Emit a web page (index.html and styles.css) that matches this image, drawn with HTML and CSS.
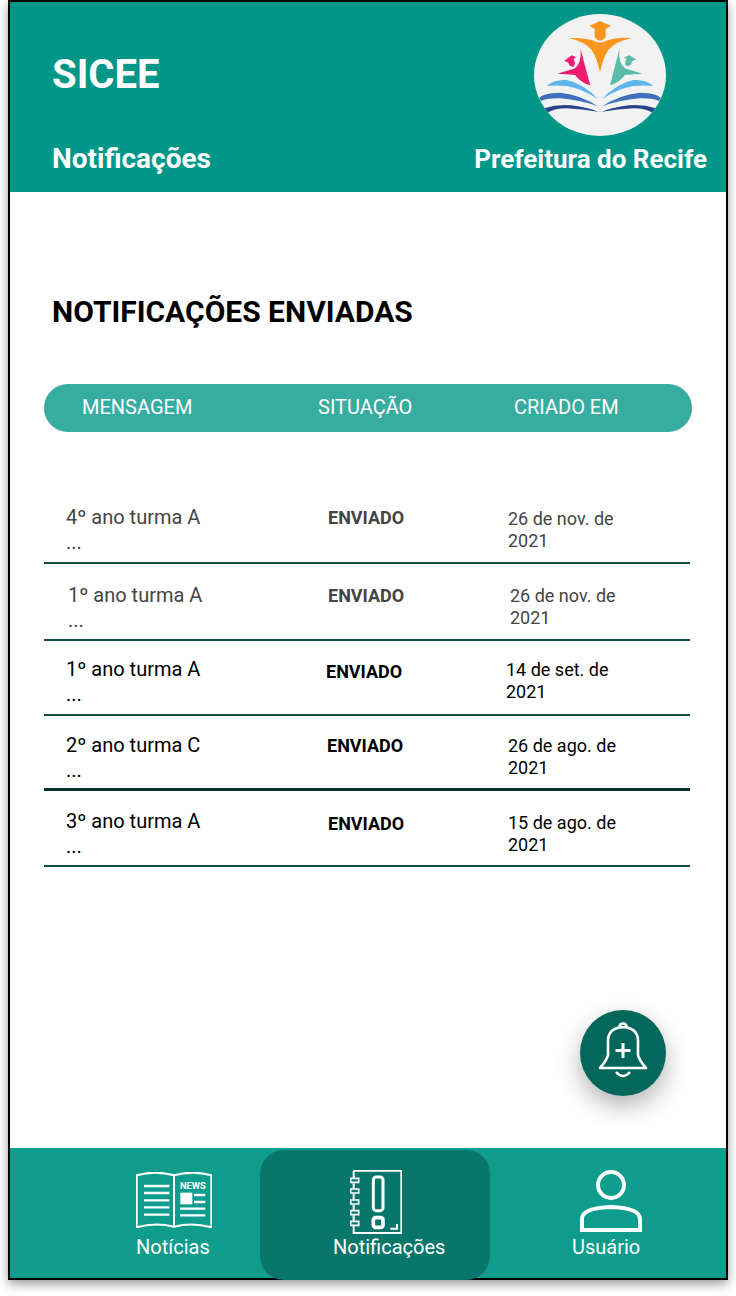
FILE: index.html
```html
<!doctype html>
<html lang="pt-BR">
<head>
    <meta charset="UTF-8">
    <title>SICEE</title>
    <link rel="stylesheet" href="styles.css">
</head>
<body>
<div class="phone">
    <header class="top">
        <div class="top_left">
            <h1>SICEE</h1>
            <h2>Notificações</h2>
        </div>
        <div class="top_right">
            <svg class="logo" viewBox="72 42 396 366">
                <defs>
                    <clipPath id="logo_clip"><ellipse cx="270" cy="225" rx="198" ry="183"/></clipPath>
                </defs>
                <ellipse cx="270" cy="225" rx="198" ry="183" fill="#f2f2f2"/>
                <g clip-path="url(#logo_clip)">
                    <path fill="#f8951d" d="M238 78 L270 63 L303 78 L287 86 L287 112 Q270 132 254 112 L254 86 Z"/>
                    <path fill="#f8951d" d="M176 114 Q230 112 258 125 Q270 130 282 125 Q315 110 365 114 Q315 125 295 150 Q278 175 270 218 Q262 175 245 150 Q225 125 176 114 Z"/>
                    <path fill="#ed1a70" d="M212 147 Q225 200 241 256 Q215 250 195 225 Q170 222 143 221 Q175 212 195 205 Q215 190 212 147 Z"/>
                    <path fill="#ed1a70" d="M163 182 L185 166 L198 172 L190 178 Q200 190 190 200 Q178 200 175 188 Z"/>
                    <path fill="#5cbcaa" d="M328 147 Q315 200 300 256 Q325 250 345 225 Q370 222 398 222 Q365 212 345 205 Q325 190 328 147 Z"/>
                    <path fill="#5cbcaa" d="M378 178 L358 166 L342 172 L350 178 Q340 190 350 198 Q365 198 365 185 Z"/>
                    <g>
                        <path fill="#5fb4ea" d="M110 258 Q130 238 170 240 Q220 250 265 298 Q215 265 170 258 Q140 255 110 258 Z"/>
                        <path fill="#3f70bb" d="M88 295 Q95 280 150 278 Q215 285 265 320 Q215 300 150 295 Q115 293 92 303 Z"/>
                        <path fill="#27418d" d="M103 325 Q150 310 200 318 Q240 325 265 335 Q215 328 170 325 Q135 325 112 338 Z"/>
                    </g>
                    <g transform="matrix(-1 0 0 1 540 0)">
                        <path fill="#5fb4ea" d="M110 258 Q130 238 170 240 Q220 250 265 298 Q215 265 170 258 Q140 255 110 258 Z"/>
                        <path fill="#3f70bb" d="M88 295 Q95 280 150 278 Q215 285 265 320 Q215 300 150 295 Q115 293 92 303 Z"/>
                        <path fill="#27418d" d="M103 325 Q150 310 200 318 Q240 325 265 335 Q215 328 170 325 Q135 325 112 338 Z"/>
                    </g>
                </g>
            </svg>
            <span class="city">Prefeitura do Recife</span>
        </div>
    </header>

    <main class="content">
        <h3 class="title">NOTIFICAÇÕES ENVIADAS</h3>
        <div class="thead">
            <span class="th_msg">MENSAGEM</span>
            <span class="th_sit">SITUAÇÃO</span>
            <span class="th_date">CRIADO EM</span>
        </div>
        <ul class="list">
            <li class="row row_gray row_1">
                <div class="msg">4º ano turma A<br>...</div>
                <div class="sit">ENVIADO</div>
                <div class="date">26 de nov. de<br>2021</div>
            </li>
            <li class="row row_gray row_2">
                <div class="msg">1º ano turma A<br>...</div>
                <div class="sit">ENVIADO</div>
                <div class="date">26 de nov. de<br>2021</div>
            </li>
            <li class="row row_3">
                <div class="msg">1º ano turma A<br>...</div>
                <div class="sit">ENVIADO</div>
                <div class="date">14 de set. de<br>2021</div>
            </li>
            <li class="row row_4">
                <div class="msg">2º ano turma C<br>...</div>
                <div class="sit">ENVIADO</div>
                <div class="date">26 de ago. de<br>2021</div>
            </li>
            <li class="row row_5">
                <div class="msg">3º ano turma A<br>...</div>
                <div class="sit">ENVIADO</div>
                <div class="date">15 de ago. de<br>2021</div>
            </li>
        </ul>
    </main>

    <button class="fab">
        <svg width="50" height="56" viewBox="0 0 50 56" fill="none" stroke="#fff" stroke-width="2.6">
            <path d="M21.5 5 Q21.5 1.5 25 1.5 Q28.5 1.5 28.5 5"/>
            <path d="M10 33 L10 19 Q10 6 25 5 Q40 6 40 19 L40 33 Q41 38 48 46 L2 46 Q9 38 10 33 Z" stroke-linejoin="round"/>
            <path d="M25 21 L25 36 M17.5 28.5 L32.5 28.5" stroke-width="3"/>
            <path d="M18 50 Q25 58 32 50"/>
        </svg>
    </button>

    <nav class="nav">
        <a class="nav_item nav_news">
            <svg width="76" height="56" viewBox="108 98 228 168" fill="none" stroke="#fff">
                <path stroke-width="6" d="M110 108 Q165 92 222 108 Q278 92 334 108 L334 264 Q278 248 222 262 Q165 248 110 264 Z M222 108 L222 262"/>
                <path stroke-width="7" d="M132 140 H208 M132 161 H208 M132 183 H208 M132 204 H208 M132 226 H208 M240 208 H316 M240 228 H316 M282 167 H316 M282 188 H316"/>
                <rect x="241" y="160" width="36" height="35" fill="#fff" stroke="none"/>
                <text class="news_text" x="240" y="150">NEWS</text>
            </svg>
            <span>Notícias</span>
        </a>
        <a class="nav_item nav_notif">
            <svg width="52" height="64" viewBox="750 90 156 192" fill="none" stroke="#fff">
                <path stroke-width="6" d="M761 92 H904 V279 H761 V258 M761 242 V226 M761 210 V194 M761 178 V162 M761 146 V130 M761 114 V92"/>
                <path stroke-width="5" d="M752 115 H776 V127 H752 Z M752 147 H776 V159 H752 Z M752 180 H776 V192 H752 Z M752 212 H776 V224 H752 Z M752 244 H776 V256 H752 Z"/>
                <rect x="820" y="111" width="29" height="101" rx="9" stroke-width="9"/>
                <rect x="820" y="233" width="29" height="29" rx="7" stroke-width="11"/>
                <path stroke-width="6" d="M871 266 H891 V252"/>
            </svg>
            <span>Notificações</span>
        </a>
        <a class="nav_item nav_user">
            <svg width="62" height="62" viewBox="0 0 62 62" fill="none" stroke="#fff" stroke-width="4">
                <circle cx="31" cy="15" r="13"/>
                <path d="M2 60 L2 49 Q2 38 31 37 Q60 38 60 49 L60 60 Z"/>
            </svg>
            <span>Usuário</span>
        </a>
    </nav>
</div>
</body>
</html>
```

FILE: styles.css
```css
* {
    margin: 0;
    padding: 0;
    list-style: none;
    box-sizing: border-box;
}

body {
    background: #fff;
    font-family: Roboto, "Noto Sans", sans-serif;
    width: 736px;
    height: 1296px;
    overflow: hidden;
}

.phone {
    position: relative;
    width: 720px;
    height: 1280px;
    margin-left: 8px;
    border: 2px solid #000;
    background: #fff;
    display: flex;
    flex-direction: column;
    box-shadow: 0 4px 10px rgba(0, 0, 0, 0.4);
}

.top {
    height: 190px;
    background: #019788;
    color: #fff;
    display: flex;
    justify-content: space-between;
    flex-shrink: 0;
}

.top_left {
    padding: 50px 0 0 42px;
}

.top_left h1 {
    font-size: 40px;
    line-height: 46px;
    font-weight: 700;
}

.top_left h2 {
    margin-top: 45px;
    font-size: 28px;
    line-height: 32px;
    font-weight: 700;
}

.top_right {
    width: 252px;
    padding: 12px 19px 0 0;
    display: flex;
    flex-direction: column;
    align-items: flex-end;
}

.logo {
    width: 132px;
    height: 122px;
    margin-right: 41px;
}

.city {
    margin-top: 7px;
    font-size: 26px;
    line-height: 32px;
    font-weight: 700;
    white-space: nowrap;
}

.content {
    flex: 1;
    padding: 0 34px;
}

.title {
    margin: 103px 0 0 8px;
    font-size: 30px;
    line-height: 34px;
    font-weight: 700;
    color: #000;
}

.thead {
    margin-top: 55px;
    width: 648px;
    height: 48px;
    border-radius: 24px;
    background: #37aca0;
    color: #fff;
    font-size: 20px;
    line-height: 46px;
    display: flex;
}

.th_msg {
    margin-left: 38px;
    width: 236px;
}

.th_sit {
    width: 196px;
}

.list {
    margin-top: 66px;
    width: 646px;
}

.row {
    display: grid;
    border-bottom: 2px solid #0c4f46;
    padding-left: 22px;
    font-size: 20px;
    line-height: 25px;
    color: #000;
}

.row_gray {
    color: #444;
}

.row_1 {
    height: 66px;
    padding-top: 7px;
    grid-template-columns: 262px 180px 1fr;
}

.row_2 {
    height: 77px;
    padding-left: 24px;
    padding-top: 18px;
    grid-template-columns: 260px 182px 1fr;
}

.row_3 {
    height: 75px;
    padding-top: 15px;
    grid-template-columns: 260px 180px 1fr;
}

.row_4 {
    height: 75px;
    padding-top: 16px;
    grid-template-columns: 261px 181px 1fr;
    border-bottom-width: 3px;
    border-bottom-color: #04362f;
}

.row_5 {
    height: 76px;
    padding-top: 18px;
    grid-template-columns: 262px 180px 1fr;
}

.msg {
    white-space: nowrap;
}

.row_2 .msg,
.row_3 .msg,
.row_4 .msg {
    padding-top: 1px;
}

.sit {
    font-size: 18px;
    font-weight: 700;
}

.row_2 .sit,
.row_4 .sit {
    padding-top: 1px;
}

.row_3 .sit {
    padding-top: 3px;
}

.row_5 .sit {
    padding-top: 2px;
}

.date {
    font-size: 18px;
    line-height: 22px;
    padding-top: 3px;
    white-space: nowrap;
}

.fab {
    position: absolute;
    left: 570px;
    top: 1008px;
    width: 86px;
    height: 86px;
    padding-bottom: 6px;
    border: 0;
    border-radius: 50%;
    background: #04675c;
    box-shadow: 0 10px 24px rgba(0, 0, 0, 0.3);
    display: flex;
    align-items: center;
    justify-content: center;
}

.nav {
    height: 130px;
    flex-shrink: 0;
    background: #0e9c8c;
    display: flex;
    color: #fff;
    font-size: 20px;
}

.nav_item {
    display: flex;
    flex-direction: column;
    align-items: flex-start;
}

.nav_item span {
    line-height: 22px;
}

.nav_news {
    width: 250px;
    padding: 24px 0 0 126px;
}

.nav_news span {
    margin-top: 8px;
}

.nav_notif {
    width: 230px;
    height: 130px;
    margin-top: 2px;
    padding: 20px 0 0 73px;
    border-radius: 24px;
    background: #08766b;
}

.nav_notif svg {
    margin-left: 17px;
}

.nav_notif span {
    margin-top: 2px;
}

.nav_user {
    padding: 22px 0 0 82px;
}

.nav_user svg {
    margin-left: 8px;
}

.nav_user span {
    margin-top: 4px;
}

.news_text {
    font-family: Roboto, sans-serif;
    font-size: 28px;
    font-weight: 700;
    fill: #fff;
    stroke: none;
}
```
